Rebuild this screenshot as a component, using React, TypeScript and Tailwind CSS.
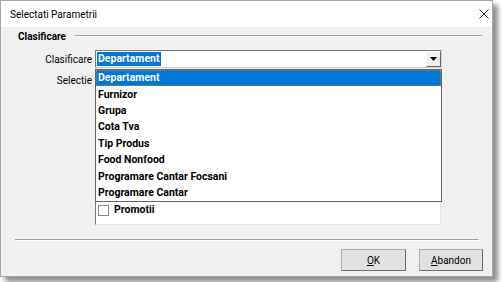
import React from "react";

const items = [
  "Departament",
  "Furnizor",
  "Grupa",
  "Cota Tva",
  "Tip Produs",
  "Food Nonfood",
  "Programare Cantar Focsani",
  "Programare Cantar",
];

const font = { fontFamily: "Roboto, 'Liberation Sans', sans-serif" };

export default function App() {
  return (
    <div className="w-[502px] h-[282px] bg-white" style={font}>
      <div className="relative w-[493px] h-[277px] border border-[#a6a6a6] bg-[#f0f0f0] flex flex-col shadow-[5px_5px_5px_rgba(0,0,0,0.45)]">
        {/* title bar */}
        <div className="h-[26px] bg-white flex items-center justify-between pl-[9px] pr-[3px] shrink-0">
          <span className="text-[10px] text-black">Selectati Parametrii</span>
          <svg width="10" height="10" viewBox="0 0 10 10">
            <path d="M0.5 0.5 L9.5 9.5 M9.5 0.5 L0.5 9.5" stroke="#222" strokeWidth="1" />
          </svg>
        </div>

        {/* group header */}
        <div className="flex items-center h-[16px] mt-[1px] pl-[17px] pr-[10px]">
          <span className="text-[10px] font-bold text-black">Clasificare</span>
          <div className="flex-1 ml-[9px] h-[2px] border-t border-[#a0a0a0] border-b border-b-white" />
        </div>

        {/* combo row */}
        <div className="flex items-center mt-[6px] h-[18px]">
          <span className="w-[91px] text-right text-[10px] text-black">Clasificare</span>
          <div className="ml-[3px] w-[347px] h-[18px] bg-white border border-[#7a7a7a] border-b-[#d0d0d0] border-r-[#d0d0d0] flex items-center pl-[1px]">
            <span className="bg-[#0078d7] text-white text-[10.5px] font-bold leading-[14px] px-[1px]">Departament</span>
            <div className="ml-auto w-[15px] h-[16px] bg-[#f0f0f0] border border-t-white border-l-white border-r-[#696969] border-b-[#696969] flex items-center justify-center">
              <svg width="7" height="4" viewBox="0 0 7 4">
                <path d="M0 0 H7 L3.5 4 Z" fill="#000" />
              </svg>
            </div>
          </div>
        </div>

        {/* selectie row */}
        <div className="flex items-start mt-[3px]">
          <span className="w-[91px] text-right text-[10px] text-black mt-[2px]">Selectie</span>
          <div className="ml-[3px] w-[346px] h-[154px] bg-white border border-[#7a7a7a] border-b-[#e3e3e3] border-r-[#e3e3e3] flex flex-col justify-end pb-[6px]">
            <div className="flex items-center h-[16px] pl-[2px]">
              <div className="w-[11px] h-[11px] border border-[#8a8a8a] bg-white" />
              <span className="ml-[5px] text-[10.5px] font-bold text-black">Promotii</span>
            </div>
          </div>
        </div>

        {/* separator */}
        <div className="mx-[14px] mt-[14px] h-[2px] border-t border-[#a0a0a0] border-b border-b-white" />

        {/* buttons */}
        <div className="flex justify-end gap-[13px] pr-[9px] mt-[8px]">
          <button className="w-[65px] h-[22px] bg-[#e1e1e1] border border-[#adadad] border-b-[#6e6e6e] border-r-[#6e6e6e] text-[10px] text-black">
            <span className="underline">O</span>K
          </button>
          <button className="w-[64px] h-[22px] bg-[#e1e1e1] border border-[#adadad] border-b-[#6e6e6e] border-r-[#6e6e6e] text-[10px] text-black">
            <span className="underline">A</span>bandon
          </button>
        </div>

        {/* open dropdown list */}
        <div className="absolute left-[94px] top-[68px] w-[347px] h-[133px] bg-white border border-[#646464] flex flex-col">
          {items.map((it, i) => (
            <div
              key={it}
              className={
                i === 0
                  ? "h-[16.4px] flex items-center pl-[2px] bg-[#0078d7] text-white text-[10.5px] font-bold outline-1 outline-dotted outline-[#c0803a] -outline-offset-1"
                  : "h-[16.4px] flex items-center pl-[2px] text-black text-[10.5px] font-bold"
              }
            >
              {it}
            </div>
          ))}
        </div>
      </div>
    </div>
  );
}
